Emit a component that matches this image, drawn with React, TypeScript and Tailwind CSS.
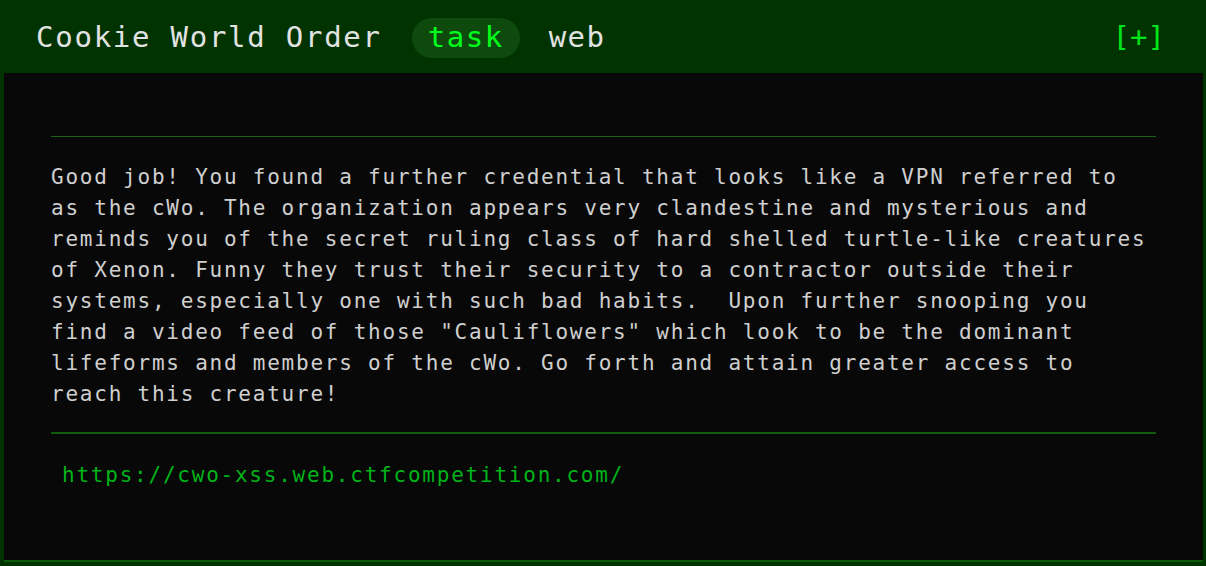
import React from "react";

const lines = [
  "Good job! You found a further credential that looks like a VPN referred to",
  "as the cWo. The organization appears very clandestine and mysterious and",
  "reminds you of the secret ruling class of hard shelled turtle-like creatures",
  "of Xenon. Funny they trust their security to a contractor outside their",
  "systems, especially one with such bad habits.  Upon further snooping you",
  'find a video feed of those "Cauliflowers" which look to be the dominant',
  "lifeforms and members of the cWo. Go forth and attain greater access to",
  "reach this creature!",
];

export default function App() {
  const mono = { fontFamily: '"DejaVu Sans Mono", "Liberation Mono", monospace' };
  return (
    <div className="w-[1206px] h-[566px] bg-[#003300] flex flex-col overflow-hidden" style={mono}>
      <div className="h-[73px] shrink-0 flex items-center pl-[36px] pr-[41px] pt-[3px]">
        <span className="text-[29px] tracking-[1.75px] text-[#e2e2e2]">Cookie World Order</span>
        <span className="ml-[30px] h-[40px] px-[16px] rounded-full bg-[#0e4a0e] flex items-center text-[29px] tracking-[1.5px] text-[#00ff1a]">task</span>
        <span className="ml-[29px] text-[29px] tracking-[1.5px] text-[#e2e2e2]">web</span>
        <span className="ml-auto text-[29px] tracking-[0px] text-[#00e61a]">[+]</span>
      </div>
      <div className="ml-[4px] mr-[3px] h-[489px] bg-[#080808] border-b-[2px] border-[#0c5a0c] px-[47px] pt-[63px]">
        <div className="h-px bg-[#166316]" />
        <div className="pt-[25px] text-[21px] leading-[31px] tracking-[1.77px] text-[#cfcfcf]">
          {lines.map((l, i) => (
            <div key={i} className="whitespace-pre">{l}</div>
          ))}
        </div>
        <div className="mt-[22px] h-[2px] bg-[#0f5c0f]" />
        <div className="pt-[26px] pl-[11px] text-[21px] leading-[31px] tracking-[1.77px] text-[#00b31a]">
          https://cwo-xss.web.ctfcompetition.com/
        </div>
      </div>
    </div>
  );
}
